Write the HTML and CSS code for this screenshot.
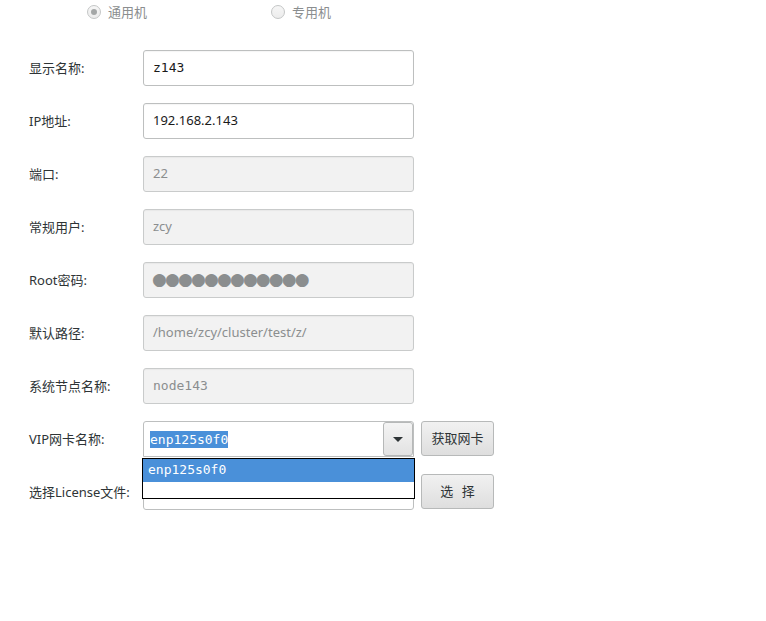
FILE: index.html
```html
<!DOCTYPE html>
<html lang="zh-CN">
<head>
<meta charset="utf-8">
<title>节点配置</title>
<link rel="stylesheet" href="styles.css">
</head>
<body>
<div class="page">
  <div class="radios">
    <label class="radio checked"><span class="dot"></span><span class="rtext">通用机</span></label>
    <label class="radio"><span class="dot"></span><span class="rtext">专用机</span></label>
  </div>

  <div class="form">
    <div class="row">
      <span class="label">显示名称:</span>
      <div class="field mono">z143</div>
    </div>
    <div class="row">
      <span class="label">IP地址:</span>
      <div class="field">192.168.2.143</div>
    </div>
    <div class="row">
      <span class="label">端口:</span>
      <div class="field disabled">22</div>
    </div>
    <div class="row">
      <span class="label">常规用户:</span>
      <div class="field disabled">zcy</div>
    </div>
    <div class="row">
      <span class="label">Root密码:</span>
      <div class="field disabled pass">●●●●●●●●●●●●</div>
    </div>
    <div class="row">
      <span class="label">默认路径:</span>
      <div class="field disabled">/home/zcy/cluster/test/z/</div>
    </div>
    <div class="row">
      <span class="label">系统节点名称:</span>
      <div class="field disabled mono">node143</div>
    </div>
    <div class="row">
      <span class="label">VIP网卡名称:</span>
      <div class="combo">
        <div class="combo-text mono"><span class="sel">enp125s0f0</span></div>
        <div class="combo-btn"><span class="caret"></span></div>
        <ul class="popup">
          <li class="item active mono">enp125s0f0</li>
          <li class="item"></li>
        </ul>
      </div>
      <button class="btn">获取网卡</button>
    </div>
    <div class="row">
      <span class="label">选择License文件:</span>
      <div class="field"></div>
      <button class="btn">选&nbsp;&nbsp;&nbsp;择</button>
    </div>
  </div>
</div>
</body>
</html>
```

FILE: styles.css
```css
* { box-sizing: border-box; }

html, body {
  margin: 0;
  background: #ffffff;
}

body {
  font-family: "Noto Sans", "Noto Sans CJK SC", sans-serif;
  font-size: 13px;
  color: #2e3436;
}

.page {
  padding-left: 29px;
  width: 766px;
  height: 621px;
}

/* radio selector row */
.radios {
  display: flex;
  height: 24px;
  align-items: center;
  padding-left: 58px;
}

.radio {
  display: flex;
  align-items: center;
  color: #8b8e8f;
  font-size: 13px;
  width: 184px;
}

.dot {
  width: 14px;
  height: 14px;
  border-radius: 50%;
  border: 1px solid #c4c6c6;
  background: linear-gradient(#f6f6f6, #ececec);
  margin-right: 7px;
  display: flex;
  align-items: center;
  justify-content: center;
}

.radio.checked .dot::after {
  content: "";
  width: 6px;
  height: 6px;
  border-radius: 50%;
  background: #a4a7a7;
}

.rtext { line-height: 1; }

/* form rows */
.form {
  display: flex;
  flex-direction: column;
  gap: 17px;
  margin-top: 26px;
}

.row {
  display: flex;
  align-items: center;
  height: 36px;
  position: relative;
}

.label {
  width: 114px;
  flex: none;
  color: #2e3436;
  font-size: 13px;
  padding-bottom: 2px;
}

.field {
  width: 271px;
  height: 36px;
  border: 1px solid #bdbfbf;
  border-radius: 3px;
  background: #ffffff;
  box-shadow: inset 0 1px 1px rgba(0, 0, 0, 0.04);
  padding: 0 9px 2px;
  display: flex;
  align-items: center;
  color: #1a1a1a;
  font-size: 13px;
  white-space: nowrap;
}

.field.disabled {
  background: #f2f2f2;
  color: #8b8e8f;
  border-color: #c9cbcb;
}

.mono {
  font-family: "DejaVu Sans Mono", monospace;
  font-size: 13px;
}

.pass {
  font-family: "DejaVu Sans", sans-serif;
  font-size: 17px;
  letter-spacing: -1.85px;
  color: #8a8a8a;
  padding-left: 8px;
}

/* combo box */
.combo {
  width: 271px;
  height: 36px;
  border: 1px solid #bdbfbf;
  border-radius: 3px 3px 0 0;
  background: #ffffff;
  display: flex;
  align-items: center;
  position: relative;
}

.combo-text {
  flex: 1;
  padding-left: 6px;
  color: #1a1a1a;
}

.sel {
  background: #4a90d9;
  color: #ffffff;
  padding: 1px 0;
}

.combo-btn {
  width: 30px;
  height: 34px;
  border: 1px solid #b6b8b8;
  border-radius: 3px;
  background: linear-gradient(#f4f4f4, #e2e2e2);
  display: flex;
  align-items: center;
  justify-content: center;
}

.caret {
  width: 0;
  height: 0;
  border-left: 5px solid transparent;
  border-right: 5px solid transparent;
  border-top: 5px solid #2e3436;
}

.popup {
  position: absolute;
  left: -2px;
  top: 36px;
  width: 273px;
  height: 41px;
  margin: 0;
  padding: 0;
  list-style: none;
  border: 1px solid #000000;
  background: #ffffff;
  z-index: 2;
}

.item {
  height: 23px;
  line-height: 22px;
  padding-left: 5px;
  color: #ffffff;
}

.item.active {
  background: #4a90d9;
}

/* push buttons */
.btn {
  margin-left: 7px;
  width: 73px;
  height: 35px;
  border: 1px solid #b7b9b9;
  border-radius: 3px;
  background: linear-gradient(#f1f1f1, #dedede);
  font-family: "Noto Sans CJK SC", "Noto Sans", sans-serif;
  font-size: 13px;
  color: #2e3436;
  padding: 0 0 2px;
  align-self: flex-start;
}
```
